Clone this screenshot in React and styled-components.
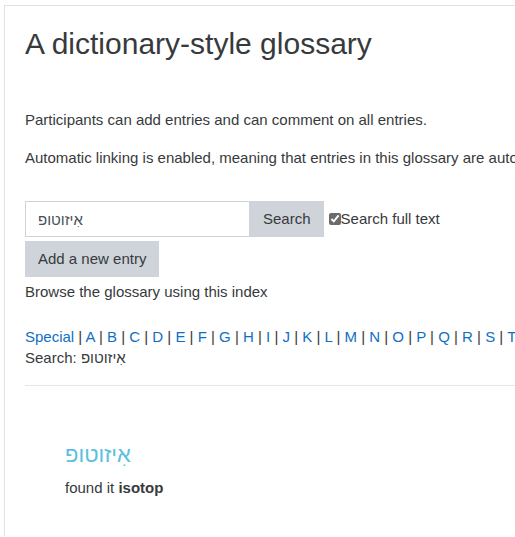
import React from 'react';
import styled, { createGlobalStyle } from 'styled-components';

const GlobalStyle = createGlobalStyle`
  body {
    margin: 0;
    background: #fff;
    font-family: "Liberation Sans", Arial, sans-serif;
    font-size: 15px;
    line-height: 1.5;
    color: #373a3c;
    overflow: hidden;
  }
`;

const Page = styled.div`
  padding: 5px 0 0 4px;
  width: 700px;
`;

const Card = styled.section`
  border: 1px solid #dee2e6;
  border-right: none;
  border-bottom: none;
  padding: 20px 20px 36px 20px;
`;

const Title = styled.h2`
  margin: 0 0 47px;
  font-size: 30px;
  font-weight: 400;
  line-height: 1.2;
`;

const Para = styled.p`
  margin: 0 0 15px;
`;

const SearchForm = styled.form`
  display: flex;
  align-items: center;
  margin-top: 32px;
`;

const SearchInput = styled.input`
  box-sizing: border-box;
  width: 224px;
  height: 36px;
  padding: 6px 12px;
  border: 1px solid #ced4da;
  border-right: none;
  font: inherit;
  color: #495057;
  outline: none;
`;

const Button = styled.button`
  box-sizing: border-box;
  height: 36px;
  padding: 6px 13px 6px ${p => (p.$attached ? '14px' : '13px')};
  border: none;
  background: #ced4da;
  color: #373a3c;
  font: inherit;
  cursor: pointer;
`;

const CheckLabel = styled.label`
  display: flex;
  align-items: center;
  margin-left: 5px;
`;

const Check = styled.input`
  width: 12px;
  height: 12px;
  margin: 0;
  accent-color: #6b6b6b;
`;

const Actions = styled.div`
  margin-top: 4px;
`;

const Browse = styled.p`
  margin: 4px 0 0;
`;

const Index = styled.div`
  margin-top: 23px;
  line-height: 20px;
  white-space: nowrap;
`;

const Letter = styled.a`
  color: #0f6fc5;
  text-decoration: none;
`;

const Rule = styled.hr`
  margin: 16px 0 0;
  border: 0;
  border-top: 1px solid #e5e5e5;
`;

const Entry = styled.div`
  padding: 56px 0 0 40px;
`;

const Concept = styled.h3`
  margin: 0 0 9px;
  font-size: 22px;
  font-weight: 400;
  line-height: 1.2;
  color: #5bc0de;
`;

const Definition = styled.p`
  margin: 0;
`;

const letters = ['A','B','C','D','E','F','G','H','I','J','K','L','M','N','O','P','Q','R','S','T','U','V','W','X','Y','Z'];
const word = 'אִיזוטופ';

export default function App() {
  return (
    <>
      <GlobalStyle />
      <Page>
        <Card>
          <Title>A dictionary-style glossary</Title>
          <Para>Participants can add entries and can comment on all entries.</Para>
          <Para>Automatic linking is enabled, meaning that entries in this glossary are automatically linked.</Para>
          <SearchForm>
            <SearchInput defaultValue={word} />
            <Button type="button" $attached>Search</Button>
            <CheckLabel>
              <Check type="checkbox" defaultChecked />
              Search full text
            </CheckLabel>
          </SearchForm>
          <Actions>
            <Button type="button">Add a new entry</Button>
          </Actions>
          <Browse>Browse the glossary using this index</Browse>
          <Index>
            <Letter href="#">Special</Letter>
            {letters.map(l => (
              <React.Fragment key={l}> | <Letter href="#">{l}</Letter></React.Fragment>
            ))}
          </Index>
          <div>Search: {word}</div>
          <Rule />
          <Entry>
            <Concept>{word}</Concept>
            <Definition>found it <b>isotop</b></Definition>
          </Entry>
        </Card>
      </Page>
    </>
  );
}
